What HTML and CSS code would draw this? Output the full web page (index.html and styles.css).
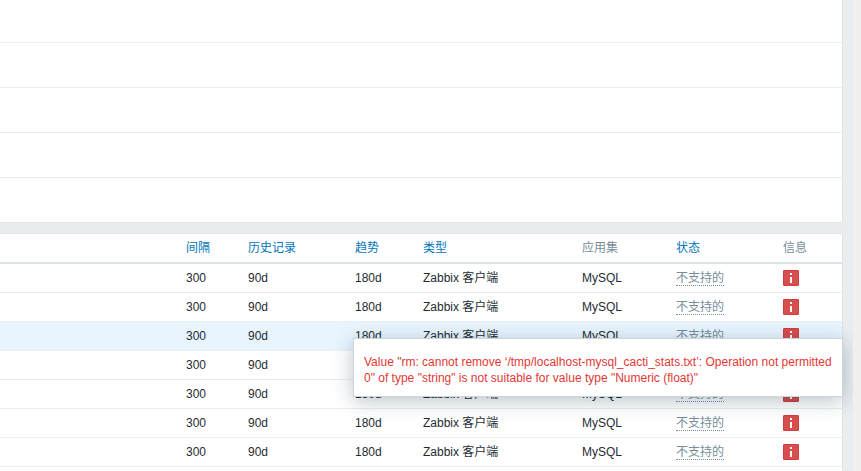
FILE: index.html
```html
<!DOCTYPE html>
<html lang="zh-CN">
<head>
<meta charset="utf-8">
<title>监控项</title>
<link rel="stylesheet" href="styles.css">
</head>
<body>
<main class="content">
  <section class="filter"><div></div><div></div><div></div><div></div><div></div></section>
  <section class="items">
    <div class="row head"><a>间隔</a><a>历史记录</a><a>趋势</a><a>类型</a><span>应用集</span><a>状态</a><span>信息</span></div>
    <div class="row"><span>300</span><span>90d</span><span>180d</span><span>Zabbix 客户端</span><span>MySQL</span><span><span class="state">不支持的</span></span><i class="info"></i></div>
    <div class="row"><span>300</span><span>90d</span><span>180d</span><span>Zabbix 客户端</span><span>MySQL</span><span><span class="state">不支持的</span></span><i class="info"></i></div>
    <div class="row hover"><span>300</span><span>90d</span><span>180d</span><span>Zabbix 客户端</span><span>MySQL</span><span><span class="state">不支持的</span></span><i class="info"></i></div>
    <div class="row"><span>300</span><span>90d</span><span>180d</span><span>Zabbix 客户端</span><span>MySQL</span><span><span class="state">不支持的</span></span><i class="info"></i></div>
    <div class="row"><span>300</span><span>90d</span><span>180d</span><span>Zabbix 客户端</span><span>MySQL</span><span><span class="state">不支持的</span></span><i class="info"></i></div>
    <div class="row"><span>300</span><span>90d</span><span>180d</span><span>Zabbix 客户端</span><span>MySQL</span><span><span class="state">不支持的</span></span><i class="info"></i></div>
    <div class="row"><span>300</span><span>90d</span><span>180d</span><span>Zabbix 客户端</span><span>MySQL</span><span><span class="state">不支持的</span></span><i class="info"></i></div>
    <div class="hint">Value "rm: cannot remove ‘/tmp/localhost-mysql_cacti_stats.txt’: Operation not permitted<br>0" of type "string" is not suitable for value type "Numeric (float)"</div>
  </section>
</main>
<div class="scrollbar"></div>
</body>
</html>
```

FILE: styles.css
```css
* { box-sizing: border-box; }
body {
  margin: 0;
  height: 471px;
  overflow: hidden;
  display: flex;
  background: #e9edf0;
  color: #1f2c33;
  font: 12px/16px "Liberation Sans", "Noto Sans CJK SC", sans-serif;
}
.content { width: 843px; display: flex; flex-direction: column; }
.scrollbar {
  position: relative;
  z-index: 1;
  width: 8px;
  margin-left: auto;
  background: #f0f0f0;
}
.filter {
  height: 223px;
  background: #fff;
  border: solid #dfe4e7;
  border-width: 0 1px 1px 0;
}
.filter div { height: 45px; border-bottom: 1px solid #ebeef0; }
.filter div:first-child { height: 43px; }
.filter div:last-child { height: 44px; border: 0; }
.items {
  position: relative;
  flex: 1;
  margin-top: 10px;
  background: #fff;
  border: solid #dfe4e7;
  border-width: 1px 1px 0 0;
}
.row {
  display: grid;
  grid-template-columns: 62px 107px 68px 159px 94px 107px 1fr;
  align-items: center;
  height: 29px;
  padding-left: 186px;
  border-bottom: 1px solid #ebeef0;
  white-space: nowrap;
}
.head { height: 30px; border-bottom: 2px solid #dfe4e7; color: #768d99; }
.head a { color: #0275b8; }
.hover { background: #e8f5ff; }
.state {
  display: inline-block;
  height: 16px;
  line-height: 16px;
  vertical-align: top;
  color: #768d99;
  border-bottom: 1px dotted #768d99;
}
.info {
  position: relative;
  width: 16px;
  height: 16px;
  background: #d64e4e;
  border: 1px solid #d23d3d;
  border-radius: 1px;
}
.info::before, .info::after {
  content: "";
  position: absolute;
  left: 6px;
  width: 2px;
  background: #fff;
}
.info::before { top: 2px; height: 2px; }
.info::after { top: 6px; height: 6px; }
.hint {
  position: absolute;
  left: 353px;
  top: 104px;
  width: 490px;
  height: 59px;
  padding: 15px 10px 0;
  background: #fff;
  border: 1px solid #ccd5d9;
  box-shadow: 0 4px 20px rgba(0, 39, 56, .28);
  color: #e33734;
  white-space: nowrap;
}
```
